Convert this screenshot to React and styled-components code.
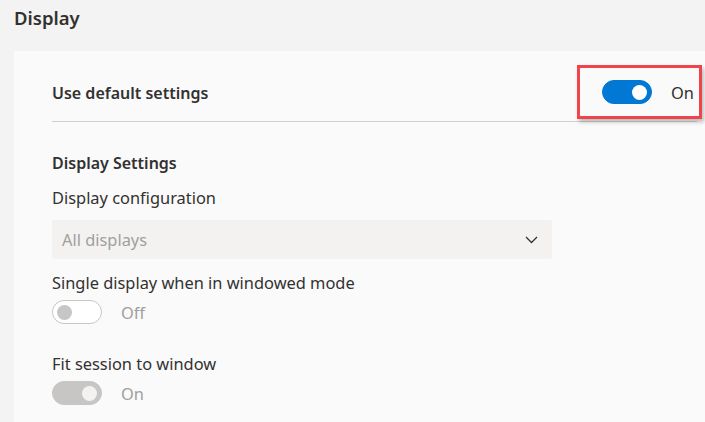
import React from 'react';
import styled, { createGlobalStyle } from 'styled-components';

const GlobalStyle = createGlobalStyle`
  html, body {
    margin: 0;
    padding: 0;
    background: #f3f3f3;
    overflow: hidden;
  }
  body {
    font-family: "Noto Sans", "Open Sans", sans-serif;
    color: #323130;
  }
`;

const Page = styled.div`
  width: 705px;
  height: 422px;
  overflow: hidden;
`;

const PageTitle = styled.h2`
  margin: 0;
  padding: 6px 0 0 14px;
  height: 51px;
  box-sizing: border-box;
  font-size: 18.5px;
  font-weight: 600;
  line-height: 24px;
`;

const Card = styled.section`
  margin-left: 14px;
  padding: 0 0 0 38px;
  background: #fafafa;
  height: 380px;
`;

const Inner = styled.div`
  width: 645px;
`;

const HeaderRow = styled.div`
  display: flex;
  align-items: center;
  justify-content: space-between;
  height: 70px;
  border-bottom: 1px solid #cfcfcf;
`;

const HeaderLabel = styled.span`
  font-size: 16px;
  font-weight: 600;
  padding-top: 14px;
`;

const Highlight = styled.div`
  display: flex;
  align-items: center;
  gap: 19px;
  width: 125px;
  height: 54px;
  box-sizing: border-box;
  border: 3px solid #f0444a;
  box-shadow: 2px 3px 4px rgba(0, 0, 0, 0.25);
  padding-left: 22px;
  margin-right: -5px;
  margin-top: 12px;
`;

const Section = styled.div`
  padding-top: 29px;
`;

const SectionTitle = styled.div`
  font-size: 16px;
  font-weight: 600;
  line-height: 24px;
`;

const Label = styled.div`
  font-size: 16.4px;
  line-height: 24px;
  margin-top: ${(p) => p.$top || 0}px;
`;

const Select = styled.div`
  display: flex;
  align-items: center;
  justify-content: space-between;
  width: 500px;
  height: 39px;
  box-sizing: border-box;
  margin-top: 10px;
  padding: 0 14px 0 10px;
  background: #f3f2f1;
  border-radius: 2px;
  color: #a19f9d;
  font-size: 16.4px;
`;

const ToggleRow = styled.div`
  display: flex;
  align-items: center;
  gap: 19px;
  margin-top: ${(p) => p.$top || 0}px;
`;

const Track = styled.span`
  position: relative;
  display: inline-block;
  width: 50px;
  height: 24px;
  box-sizing: border-box;
  border-radius: 12px;
  background: ${(p) => p.$bg};
  border: 1px solid ${(p) => p.$border};
`;

const Knob = styled.span`
  position: absolute;
  top: 3.5px;
  ${(p) => (p.$on ? 'right: 4px;' : 'left: 4px;')}
  width: 15px;
  height: 15px;
  border-radius: 50%;
  background: ${(p) => p.$color};
`;

const StateText = styled.span`
  font-size: 16.4px;
  color: ${(p) => p.$color};
`;

function Toggle({ on, variant }) {
  const looks = {
    active: { bg: '#0078d4', border: '#0078d4', knob: '#ffffff' },
    off: { bg: '#ffffff', border: '#c8c6c4', knob: '#c8c6c4' },
    disabled: { bg: '#c8c6c4', border: '#c8c6c4', knob: '#f3f2f1' },
  }[variant];
  return (
    <Track $bg={looks.bg} $border={looks.border}>
      <Knob $on={on} $color={looks.knob} />
    </Track>
  );
}

function Chevron() {
  return (
    <svg width="13" height="8" viewBox="0 0 13 8" fill="none">
      <path d="M1 1l5.5 5.5L12 1" stroke="#323130" strokeWidth="1.3" />
    </svg>
  );
}

export default function App() {
  return (
    <Page>
      <GlobalStyle />
      <PageTitle>Display</PageTitle>
      <Card>
        <Inner>
          <HeaderRow>
            <HeaderLabel>Use default settings</HeaderLabel>
            <Highlight>
              <Toggle on variant="active" />
              <StateText $color="#323130">On</StateText>
            </Highlight>
          </HeaderRow>
          <Section>
            <SectionTitle>Display Settings</SectionTitle>
            <Label $top={11}>Display configuration</Label>
            <Select>
              <span>All displays</span>
              <Chevron />
            </Select>
            <Label $top={12}>Single display when in windowed mode</Label>
            <ToggleRow $top={5}>
              <Toggle variant="off" />
              <StateText $color="#a19f9d">Off</StateText>
            </ToggleRow>
            <Label $top={28}>Fit session to window</Label>
            <ToggleRow $top={5}>
              <Toggle on variant="disabled" />
              <StateText $color="#a19f9d">On</StateText>
            </ToggleRow>
          </Section>
        </Inner>
      </Card>
    </Page>
  );
}
